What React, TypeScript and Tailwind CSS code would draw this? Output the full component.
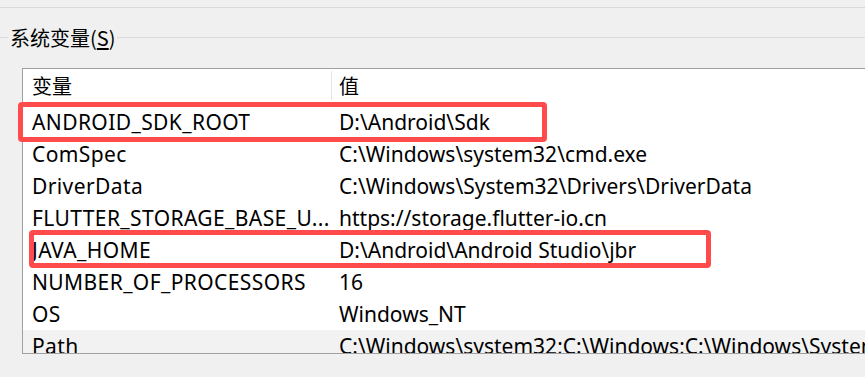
const rows: { name: string; value: string }[] = [
  { name: "ANDROID_SDK_ROOT", value: "D:\\Android\\Sdk" },
  { name: "ComSpec", value: "C:\\Windows\\system32\\cmd.exe" },
  { name: "DriverData", value: "C:\\Windows\\System32\\Drivers\\DriverData" },
  { name: "FLUTTER_STORAGE_BASE_U...", value: "https://storage.flutter-io.cn" },
  { name: "JAVA_HOME", value: "D:\\Android\\Android Studio\\jbr" },
  { name: "NUMBER_OF_PROCESSORS", value: "16" },
  { name: "OS", value: "Windows_NT" },
  {
    name: "Path",
    value: "C:\\Windows\\system32;C:\\Windows;C:\\Windows\\System32\\Wbem;C:\\Windows\\System32\\WindowsPowerShell",
  },
];

export default function App() {
  return (
    <div className="relative h-[377px] w-[865px] overflow-hidden bg-[#f0f0f0] text-black [font-family:'Noto_Sans','Noto_Sans_CJK_SC',sans-serif]">
      {/* top separator */}
      <div className="h-[8px] border-b border-[#dadada]" />

      {/* group box header */}
      <div className="mt-[16px] flex h-[27px] items-center">
        <div className="h-px w-[8px] bg-[#dcdcdc]" />
        <span className="px-[2px] text-[20px] leading-none [font-family:'Noto_Sans_CJK_SC',sans-serif]">
          系统变量(<span className="underline underline-offset-2">S</span>)
        </span>
        <div className="h-px flex-1 bg-[#dcdcdc]" />
      </div>

      {/* list view */}
      <div className="ml-[22px] mt-[17px] h-[286px] w-[900px] overflow-hidden border border-[#a0a0a0] bg-white">
        <div className="flex h-[37px]">
          <div className="flex w-[308px] items-center pl-[9px] pb-[3px] text-[20px] [font-family:'Noto_Sans_CJK_SC',sans-serif]">
            变量
          </div>
          <div className="mt-[2px] h-[29px] w-px bg-[#e5e5e5]" />
          <div className="flex items-center pl-[7px] pb-[3px] text-[20px] [font-family:'Noto_Sans_CJK_SC',sans-serif]">
            值
          </div>
        </div>
        {rows.map((r, i) => (
          <div
            key={r.name}
            className={
              "flex h-[32px] items-center whitespace-nowrap pt-[1px] text-[21px] " +
              (i === rows.length - 1 ? "bg-[#f2f2f2]" : "")
            }
          >
            <div className="w-[309px] shrink-0 pl-[9px] tracking-[0.4px]">{r.name}</div>
            <div className="pl-[7px]">{r.value}</div>
          </div>
        ))}
      </div>

      {/* highlight annotations */}
      <div className="absolute left-[18px] top-[102px] h-[40px] w-[529px] rounded-[4px] border-[5px] border-[#ff4b4b]" />
      <div className="absolute left-[29px] top-[230px] h-[38px] w-[682px] rounded-[4px] border-[5px] border-[#ff4b4b]" />
    </div>
  );
}
